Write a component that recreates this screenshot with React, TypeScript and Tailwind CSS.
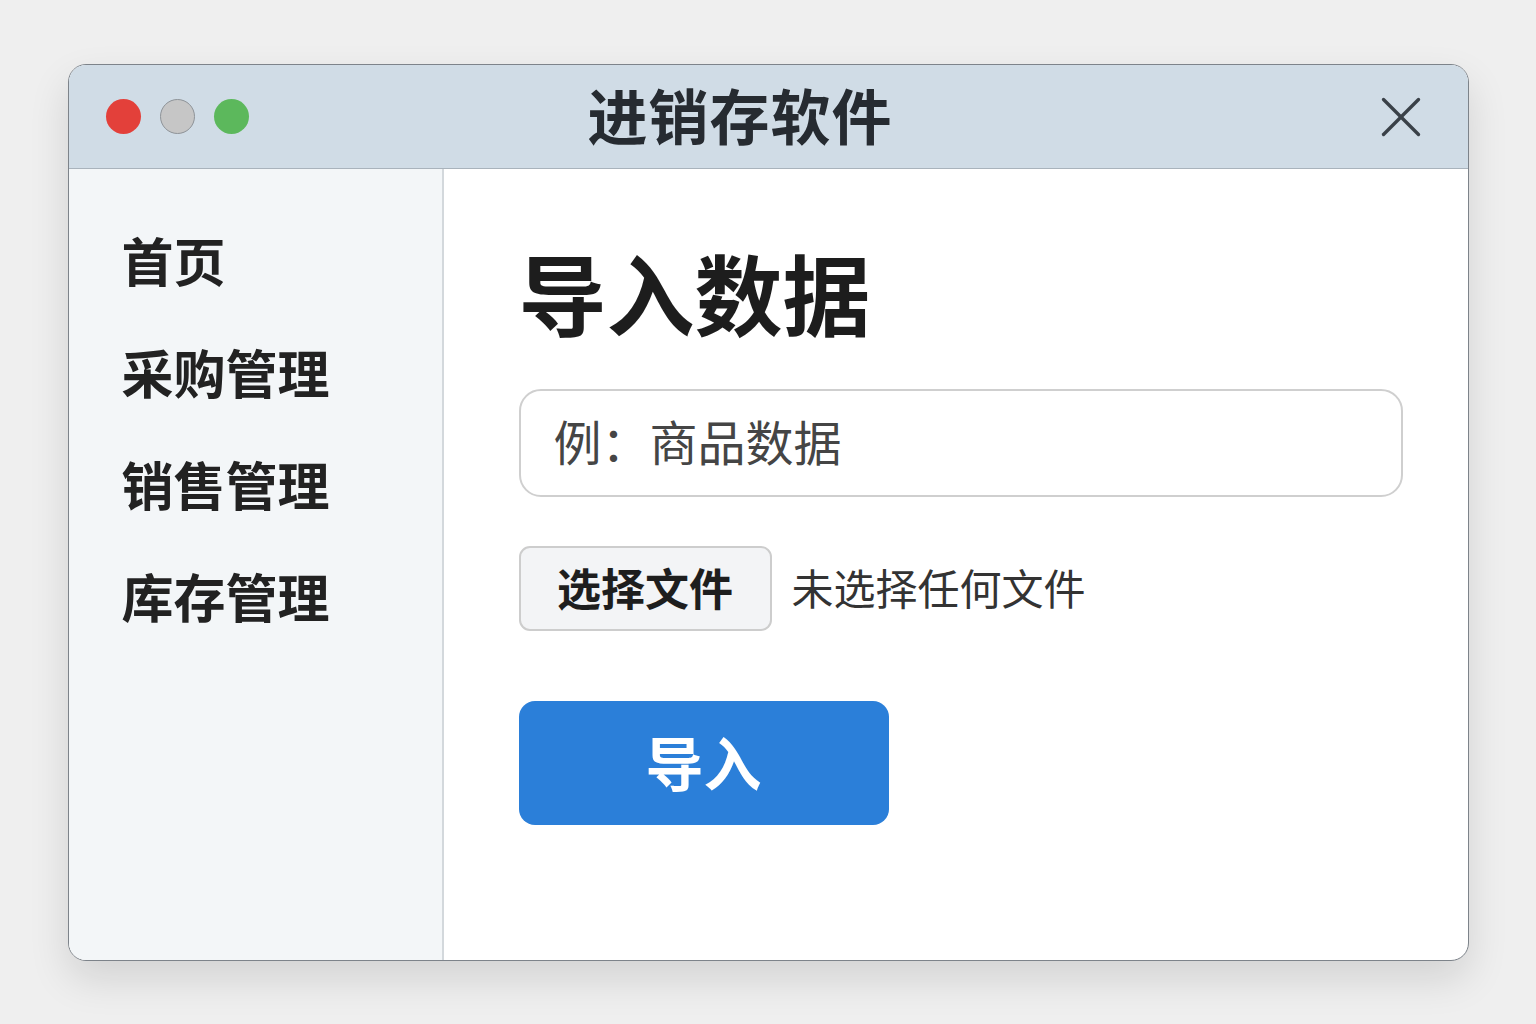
import { X } from "lucide-react";

const font = { fontFamily: '"Noto Sans", "Noto Sans CJK SC", sans-serif' };

const navItems = ["首页", "采购管理", "销售管理", "库存管理"];

export default function App() {
  return (
    <div
      className="flex h-[1024px] w-[1536px] items-start justify-center bg-[#efefef] pt-[64px]"
      style={font}
    >
      <div className="flex h-[897px] w-[1401px] flex-col overflow-hidden rounded-[18px] border-[1.5px] border-[#7d838a] bg-white shadow-[0_18px_40px_rgba(0,0,0,0.12)]">
        {/* title bar */}
        <header className="relative flex h-[104px] shrink-0 items-center border-b-[1.5px] border-[#a9b3bc] bg-[#d0dce6] pl-[37px] pr-[32px]">
          <div className="flex items-center gap-[19px]">
            <span className="h-[35px] w-[35px] rounded-full bg-[#e3403a]" />
            <span className="h-[35px] w-[35px] rounded-full border border-[#8e9398] bg-[#c6c6c6]" />
            <span className="h-[35px] w-[35px] rounded-full bg-[#5cb85c]" />
          </div>
          <h1 className="absolute left-0 right-[56px] text-center text-[60px] font-semibold leading-none tracking-[1px] text-[#262b31]">
            进销存软件
          </h1>
          <X className="ml-auto h-[70px] w-[70px] text-[#3a4148]" strokeWidth={1.15} />
        </header>

        <div className="flex flex-1">
          {/* sidebar */}
          <nav className="flex w-[375px] shrink-0 flex-col gap-[60px] border-r-2 border-[#d3d8dc] bg-[#f3f6f8] pl-[53px] pt-[67px]">
            {navItems.map((item) => (
              <div key={item} className="text-[52px] font-bold leading-[52px] text-[#222]">
                {item}
              </div>
            ))}
          </nav>

          {/* content */}
          <main className="flex flex-1 flex-col pl-[75px] pr-[65px] pt-[80px]">
            <h2 className="text-[88px] font-bold leading-[92px] text-[#1d1d1d]">导入数据</h2>

            <div className="mt-[48px] flex h-[108px] items-center rounded-[22px] border-2 border-[#cfcfcf] pl-[33px]">
              <span className="text-[48px] leading-none text-[#454545]">例：商品数据</span>
            </div>

            <div className="mt-[49px] flex items-center gap-[20px]">
              <button className="flex h-[85px] w-[253px] items-center justify-center rounded-[11px] border-2 border-[#cdcdcd] bg-[#f3f4f6] text-[44px] font-bold text-[#1e1e1e]">
                选择文件
              </button>
              <span className="text-[42px] text-[#333]">未选择任何文件</span>
            </div>

            <button className="mt-[70px] flex h-[124px] w-[370px] items-center justify-center rounded-[16px] bg-[#2b7fd9] text-[58px] font-bold text-white">
              导入
            </button>
          </main>
        </div>
      </div>
    </div>
  );
}
